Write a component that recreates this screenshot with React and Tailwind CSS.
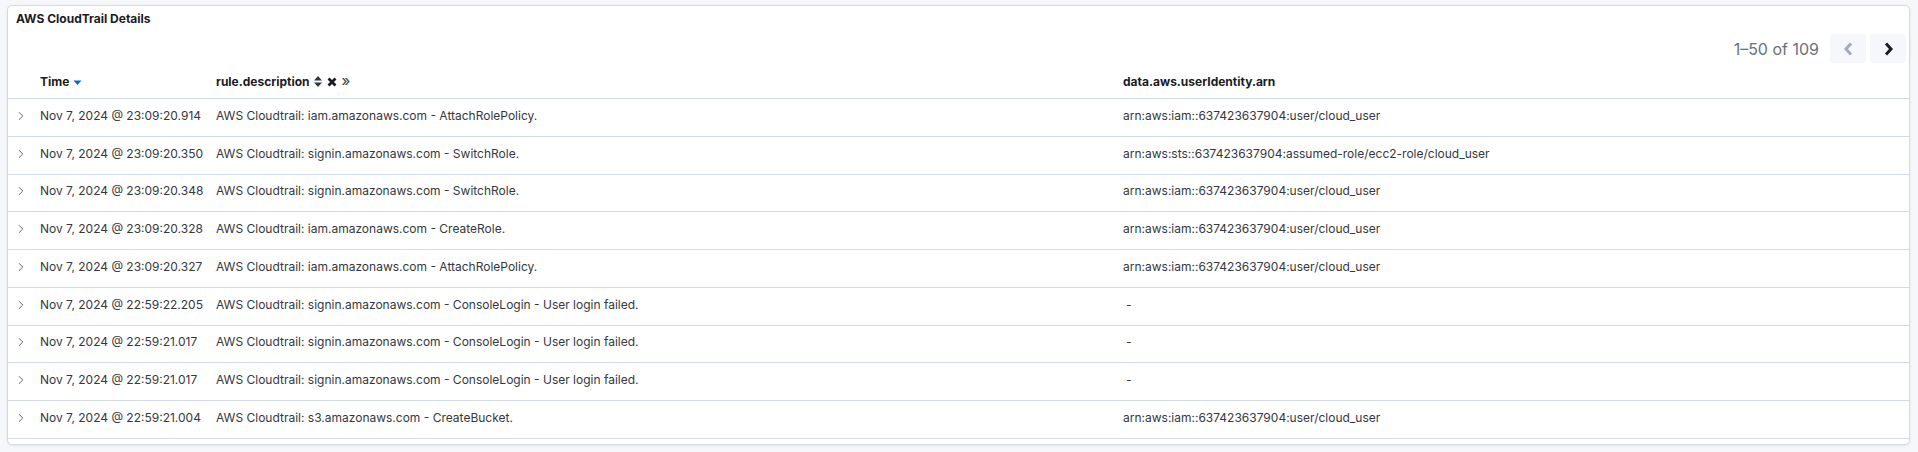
import { ChevronRight } from 'lucide-react';

const ROWS = [
  { time: 'Nov 7, 2024 @ 23:09:20.914', desc: 'AWS Cloudtrail: iam.amazonaws.com - AttachRolePolicy.', arn: 'arn:aws:iam::637423637904:user/cloud_user' },
  { time: 'Nov 7, 2024 @ 23:09:20.350', desc: 'AWS Cloudtrail: signin.amazonaws.com - SwitchRole.', arn: 'arn:aws:sts::637423637904:assumed-role/ecc2-role/cloud_user' },
  { time: 'Nov 7, 2024 @ 23:09:20.348', desc: 'AWS Cloudtrail: signin.amazonaws.com - SwitchRole.', arn: 'arn:aws:iam::637423637904:user/cloud_user' },
  { time: 'Nov 7, 2024 @ 23:09:20.328', desc: 'AWS Cloudtrail: iam.amazonaws.com - CreateRole.', arn: 'arn:aws:iam::637423637904:user/cloud_user' },
  { time: 'Nov 7, 2024 @ 23:09:20.327', desc: 'AWS Cloudtrail: iam.amazonaws.com - AttachRolePolicy.', arn: 'arn:aws:iam::637423637904:user/cloud_user' },
  { time: 'Nov 7, 2024 @ 22:59:22.205', desc: 'AWS Cloudtrail: signin.amazonaws.com - ConsoleLogin - User login failed.', arn: null },
  { time: 'Nov 7, 2024 @ 22:59:21.017', desc: 'AWS Cloudtrail: signin.amazonaws.com - ConsoleLogin - User login failed.', arn: null },
  { time: 'Nov 7, 2024 @ 22:59:21.017', desc: 'AWS Cloudtrail: signin.amazonaws.com - ConsoleLogin - User login failed.', arn: null },
  { time: 'Nov 7, 2024 @ 22:59:21.004', desc: 'AWS Cloudtrail: s3.amazonaws.com - CreateBucket.', arn: 'arn:aws:iam::637423637904:user/cloud_user' },
];

function PagerButton({ dir, disabled }) {
  return (
    <button className="w-[36px] h-[29px] rounded-[4px] bg-[#f5f7fc] flex items-center justify-center">
      <svg width="11" height="14" viewBox="0 0 11 14">
        <path
          d={dir === 'left' ? 'M8 1.5 L3 7 L8 12.5' : 'M3 1.5 L8 7 L3 12.5'}
          fill="none"
          stroke={disabled ? '#a2abba' : '#1a1c21'}
          strokeWidth="3"
        />
      </svg>
    </button>
  );
}

export default function App() {
  return (
    <div className="w-[1918px] h-[452px] bg-[#f5f7fa] pt-[5px] pl-[7px] pr-[8px] font-['Inter',sans-serif]">
      <div className="h-[440px] bg-white border border-[#d3dae6] rounded-[5px] shadow-[0_1px_3px_rgba(0,0,0,0.08)] overflow-hidden flex flex-col">
        <div className="pl-[8px] pt-[5px] h-[20px] text-[12px] font-bold text-[#1a1c21] leading-[16px]">
          AWS CloudTrail Details
        </div>

        <div className="flex items-center justify-end gap-[4px] pr-[3px] mt-[8px] h-[29px]">
          <span className="text-[16px] text-[#69707d] mr-[7px]">1–50 of 109</span>
          <PagerButton dir="left" disabled />
          <PagerButton dir="right" />
        </div>

        <div className="flex items-center h-[34px] mt-[2px] border-b border-[#d3dae6] text-[12px] font-bold text-[#1a1c21]">
          <div className="w-[32px]" />
          <div className="w-[176px] flex items-center gap-[4px]">
            Time
            <svg width="9" height="6" viewBox="0 0 9 6" className="mt-[3px]">
              <path d="M0.5 0.5 L8.5 0.5 L4.5 5 Z" fill="#0071c2" />
            </svg>
          </div>
          <div className="w-[907px] flex items-center gap-[4px]">
            rule.description
            <svg width="8" height="11" viewBox="0 0 8 11">
              <path d="M4 0 L8 4.5 L0 4.5 Z M4 11 L0 6.5 L8 6.5 Z" fill="#343741" />
            </svg>
            <svg width="10" height="10" viewBox="0 0 10 10" className="ml-[1px]">
              <path d="M1.5 1.5 L8.5 8.5 M8.5 1.5 L1.5 8.5" stroke="#1a1c21" strokeWidth="2.8" />
            </svg>
            <span className="font-normal text-[15px] leading-none ml-[1px] mb-[2px] text-[#343741]">»</span>
          </div>
          <div className="flex-1">data.aws.userIdentity.arn</div>
        </div>

        {ROWS.map((row, i) => (
          <div key={i} className="flex items-center h-[37.75px] border-b border-[#d3dae6] text-[12px] text-[#343741]">
            <div className="w-[32px] pl-[6px] pb-[3px]">
              <ChevronRight size={14} strokeWidth={1.3} className="text-[#343741]" />
            </div>
            <div className="w-[176px] pb-[3px]">{row.time}</div>
            <div className="w-[907px] pb-[3px]">{row.desc}</div>
            <div className="flex-1 pb-[3px]">
              {row.arn ? row.arn : <span className="pl-[3px]">-</span>}
            </div>
          </div>
        ))}
      </div>
    </div>
  );
}
